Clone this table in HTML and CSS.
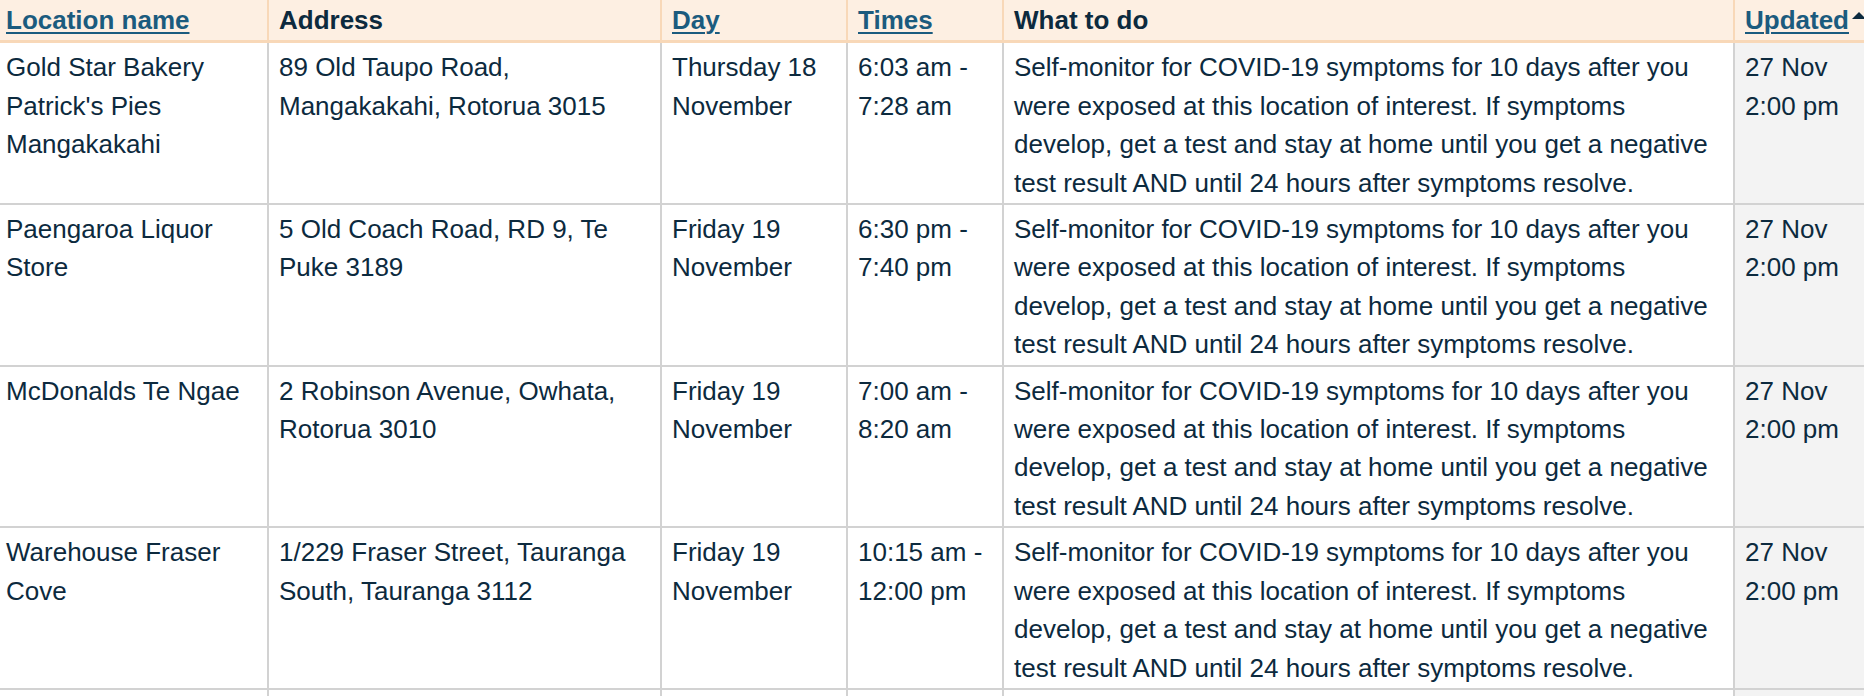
FILE: index.html
```html
<!DOCTYPE html>
<html lang="en">
<head>
<meta charset="utf-8">
<title>Locations of interest</title>
<link rel="stylesheet" href="styles.css">
</head>
<body>
<div class="viewport">
<table class="loi">
  <colgroup>
    <col class="c-name">
    <col class="c-addr">
    <col class="c-day">
    <col class="c-times">
    <col class="c-todo">
    <col class="c-upd">
  </colgroup>
  <thead>
    <tr>
      <th><a href="#">Location name</a></th>
      <th>Address</th>
      <th><a href="#">Day</a></th>
      <th><a href="#">Times</a></th>
      <th>What to do</th>
      <th class="sorted"><a href="#">Updated</a><span class="arrow"></span></th>
    </tr>
  </thead>
  <tbody>
    <tr>
      <td>Gold Star Bakery Patrick's Pies Mangakakahi</td>
      <td>89 Old Taupo Road, Mangakakahi, Rotorua 3015</td>
      <td>Thursday 18 November</td>
      <td>6:03 am - 7:28 am</td>
      <td>Self-monitor for COVID-19 symptoms for 10 days after you were exposed at this location of interest. If symptoms develop, get a test and stay at home until you get a negative test result AND until 24 hours after symptoms resolve.</td>
      <td class="sorted">27 Nov<br>2:00 pm</td>
    </tr>
    <tr>
      <td>Paengaroa Liquor Store</td>
      <td>5 Old Coach Road, RD 9, Te Puke 3189</td>
      <td>Friday 19 November</td>
      <td>6:30 pm - 7:40 pm</td>
      <td>Self-monitor for COVID-19 symptoms for 10 days after you were exposed at this location of interest. If symptoms develop, get a test and stay at home until you get a negative test result AND until 24 hours after symptoms resolve.</td>
      <td class="sorted">27 Nov<br>2:00 pm</td>
    </tr>
    <tr>
      <td>McDonalds Te Ngae</td>
      <td>2 Robinson Avenue, Owhata, Rotorua 3010</td>
      <td>Friday 19 November</td>
      <td>7:00 am - 8:20 am</td>
      <td>Self-monitor for COVID-19 symptoms for 10 days after you were exposed at this location of interest. If symptoms develop, get a test and stay at home until you get a negative test result AND until 24 hours after symptoms resolve.</td>
      <td class="sorted">27 Nov<br>2:00 pm</td>
    </tr>
    <tr>
      <td>Warehouse Fraser Cove</td>
      <td>1/229 Fraser Street, Tauranga South, Tauranga 3112</td>
      <td>Friday 19 November</td>
      <td>10:15 am - 12:00 pm</td>
      <td>Self-monitor for COVID-19 symptoms for 10 days after you were exposed at this location of interest. If symptoms develop, get a test and stay at home until you get a negative test result AND until 24 hours after symptoms resolve.</td>
      <td class="sorted">27 Nov<br>2:00 pm</td>
    </tr>
    <tr class="cut">
      <td></td>
      <td></td>
      <td></td>
      <td></td>
      <td></td>
      <td class="sorted"></td>
    </tr>
  </tbody>
</table>
</div>
</body>
</html>
```

FILE: styles.css
```css
html, body {
  margin: 0;
  padding: 0;
  background: #ffffff;
  height: 696px;
  overflow: hidden;
}

.viewport {
  width: 1864px;
  height: 696px;
  overflow: hidden;
}

.loi {
  margin-left: -6px;
  width: 1890px;
  table-layout: fixed;
  border-collapse: collapse;
  font-family: "Liberation Sans", Arial, Helvetica, sans-serif;
  font-size: 26px;
  line-height: 38.4px;
  color: #0c2a3e;
}

.c-name { width: 273px; }
.c-addr { width: 393px; }
.c-day { width: 186px; }
.c-times { width: 156px; }
.c-todo { width: 731px; }
.c-upd { width: 151px; }

.loi th {
  text-align: left;
  font-weight: bold;
  background: #fdefe2;
  padding: 1px 11px 1px 10px;
  border-left: 2px solid #f8d8b8;
  border-right: 2px solid #f8d8b8;
  border-bottom: 3px solid #f8d8b8;
  white-space: nowrap;
}

.loi th a {
  color: #1b5b7e;
  text-decoration: underline;
  text-decoration-thickness: 2px;
  text-underline-offset: 3px;
}

.loi th .arrow {
  display: inline-block;
  width: 0;
  height: 0;
  margin-left: 3px;
  border-left: 7px solid transparent;
  border-right: 7px solid transparent;
  border-bottom: 7px solid #0c2a3e;
  vertical-align: 10px;
}

.loi td {
  vertical-align: top;
  padding: 5px 11px 1px 10px;
  border: 2px solid #d2d2d2;
}

.loi tr.cut td {
  height: 60px;
}

.loi td.sorted {
  background: #f3f3f3;
}
```
